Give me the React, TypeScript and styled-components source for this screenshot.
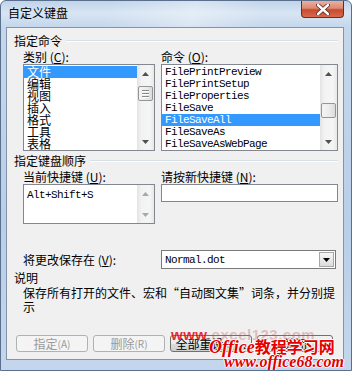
import React from 'react';
import styled, { createGlobalStyle } from 'styled-components';

const GlobalStyle = createGlobalStyle`
  html, body {
    margin: 0;
    padding: 0;
  }
  body {
    width: 352px;
    height: 375px;
    overflow: hidden;
    background: #ffffff;
    font-family: "Noto Sans CJK SC", "Liberation Sans", sans-serif;
    font-size: 12px;
    color: #000;
  }
`;

const Window = styled.div`
  position: relative;
  width: 352px;
  height: 371px;
  box-sizing: border-box;
  border: 1px solid #5a6f8c;
  border-radius: 6px 6px 0 0;
  background: linear-gradient(180deg, #bfd3ea 0px, #d8e5f3 12px, #c4d7ec 26px, #b9cfe8 60%, #c3d6ec 100%);
  display: flex;
  flex-direction: column;
  overflow: hidden;
`;

const TitleBar = styled.div`
  height: 26px;
  display: flex;
  justify-content: space-between;
  align-items: flex-start;
  padding-left: 7px;
  background: linear-gradient(100deg, rgba(255, 255, 255, 0) 30%, rgba(255, 255, 255, 0.35) 55%, rgba(255, 255, 255, 0) 75%);
`;

const TitleText = styled.div`
  margin-top: 4px;
  font-size: 12px;
  line-height: 16px;
  color: #000;
`;

const CloseButton = styled.div`
  width: 43px;
  height: 17px;
  margin-right: 7px;
  box-sizing: border-box;
  border: 1px solid #6e2a20;
  border-top: none;
  border-radius: 0 0 4px 4px;
  background: linear-gradient(180deg, #eab0a0 0%, #dc8a72 45%, #c9492e 55%, #d86a4c 100%);
  display: flex;
  align-items: center;
  justify-content: center;
`;

const Client = styled.div`
  flex: 1;
  margin: 0 7px 10px 5px;
  border: 1px solid #8393aa;
  background: #f0f0f0;
  padding: 6px 5px 0 7px;
  display: flex;
  flex-direction: column;
`;

const GroupHeader = styled.div<{ $top?: number }>`
  display: flex;
  align-items: center;
  margin-top: ${p => p.$top || 0}px;
  line-height: 14px;
  height: 14px;
`;

const Rule = styled.div`
  flex: 1;
  margin-left: 4px;
  height: 0;
  border-top: 1px solid #d5dfe5;
  border-bottom: 1px solid #ffffff;
`;

const Columns = styled.div<{ $top?: number }>`
  display: grid;
  grid-template-columns: 132px 177px;
  column-gap: 6px;
  padding-left: 9px;
  margin-top: ${p => p.$top || 0}px;
`;

const FieldLabel = styled.div<{ $h?: number }>`
  height: ${p => p.$h || 15}px;
  line-height: ${p => p.$h || 15}px;
  white-space: nowrap;
`;

const ListBox = styled.div<{ $h: number }>`
  height: ${p => p.$h}px;
  box-sizing: border-box;
  border: 1px solid #828790;
  background: #ffffff;
  display: flex;
`;

const ListItems = styled.div`
  flex: 1;
  padding-top: 1px;
  overflow: hidden;
`;

const ListItem = styled.div<{ $selected?: boolean; $mono?: boolean }>`
  height: 12px;
  line-height: 12px;
  padding-left: 3px;
  white-space: nowrap;
  background: ${p => (p.$selected ? '#3399ff' : 'transparent')};
  color: ${p => (p.$selected ? '#ffffff' : '#000000')};
  font-family: ${p => (p.$mono ? '"Liberation Mono", monospace' : '"Noto Sans CJK SC", sans-serif')};
  font-size: ${p => (p.$mono ? '11px' : '12px')};
  letter-spacing: ${p => (p.$mono ? '-0.6px' : '0')};
`;

const MonoText = styled.div`
  font-family: "Liberation Mono", monospace;
  font-size: 11px;
  letter-spacing: -0.6px;
  line-height: 12px;
  padding: 4px 0 0 3px;
  flex: 1;
`;

const ScrollBar = styled.div`
  width: 17px;
  display: flex;
  flex-direction: column;
  background: linear-gradient(90deg, #e3e3e3 0%, #f2f2f2 25%, #f5f5f5 75%, #e8e8e8 100%);
`;

const ArrowButton = styled.div`
  height: 17px;
  display: flex;
  align-items: center;
  justify-content: center;
`;

const Track = styled.div`
  flex: 1;
  display: flex;
  flex-direction: column;
  align-items: center;
`;

const Thumb = styled.div<{ $offset: number; $h: number }>`
  margin-top: ${p => p.$offset}px;
  width: 15px;
  height: ${p => p.$h}px;
  box-sizing: border-box;
  border: 1px solid #959595;
  border-radius: 2px;
  background: linear-gradient(90deg, #f4f4f4 0%, #ececec 50%, #dcdcdc 100%);
  display: flex;
  flex-direction: column;
  align-items: center;
  justify-content: center;
  gap: 1px;
`;

const Grip = styled.div`
  width: 7px;
  height: 1px;
  background: #8a8a8a;
  border-bottom: 1px solid #ffffff;
`;

const TextBox = styled.div<{ $h: number }>`
  height: ${p => p.$h}px;
  box-sizing: border-box;
  border: 1px solid #828790;
  background: #ffffff;
`;

const ComboBox = styled.div`
  height: 19px;
  width: 175px;
  box-sizing: border-box;
  border: 1px solid #7a7a7a;
  background: #ffffff;
  display: flex;
  align-items: center;
`;

const ComboValue = styled.div`
  flex: 1;
  font-family: "Liberation Mono", monospace;
  font-size: 11px;
  letter-spacing: -0.6px;
  padding-left: 3px;
`;

const ComboButton = styled.div`
  width: 15px;
  height: 15px;
  margin-right: 1px;
  box-sizing: border-box;
  border: 1px solid #a7a7a7;
  background: linear-gradient(180deg, #f6f6f6, #dcdcdc);
  display: flex;
  align-items: center;
  justify-content: center;
`;

const SaveRow = styled(Columns)`
  align-items: center;
`;

const SectionLabel = styled.div`
  margin-top: 2px;
  line-height: 14px;
`;

const Description = styled.div`
  margin: 1px -8px 0 0;
  padding-left: 9px;
  line-height: 14px;
  white-space: nowrap;
`;

const ButtonRow = styled.div`
  display: flex;
  gap: 5px;
  margin-top: 21px;
  padding-left: 2px;
`;

const DialogButton = styled.div<{ $w: number; $disabled?: boolean }>`
  width: ${p => p.$w}px;
  height: 17px;
  box-sizing: border-box;
  border: 1px solid ${p => (p.$disabled ? '#adb2b5' : '#707070')};
  border-radius: 3px;
  background: ${p => (p.$disabled ? '#f4f4f4' : 'linear-gradient(180deg, #f2f2f2 0%, #ebebeb 50%, #dddddd 50%, #cfcfcf 100%)')};
  color: ${p => (p.$disabled ? '#9a9a9a' : '#000000')};
  display: flex;
  align-items: center;
  justify-content: center;
  line-height: 14px;
  font-size: 12px;
  white-space: nowrap;
`;

const Small = styled.span`
  font-size: 10px;
`;

const Watermark = styled.div`
  position: absolute;
  left: 170px;
  top: 326px;
  pointer-events: none;
`;

const MarkSite = styled.div`
  font-family: "Liberation Sans", sans-serif;
  font-weight: bold;
  font-size: 15px;
  line-height: 15px;
  color: rgba(190, 90, 90, 0.35);
  letter-spacing: 0.5px;
`;

const MarkWww = styled.span`
  color: rgba(225, 20, 20, 0.9);
`;

const MarkBrand = styled.div`
  margin: -4px 0 0 38px;
  font-size: 16px;
  line-height: 17px;
  font-weight: bold;
  color: #e40000;
  white-space: nowrap;
  text-shadow: 1px 0 #fff, -1px 0 #fff, 0 1px #fff, 0 -1px #fff;
`;

const MarkOffice = styled.span`
  font-family: "Liberation Serif", serif;
  font-style: italic;
  font-size: 18px;
`;

const MarkUrl = styled.div`
  margin: -2px 0 0 53px;
  font-family: "Liberation Serif", serif;
  font-style: italic;
  font-weight: bold;
  font-size: 16px;
  line-height: 15px;
  color: #e00000;
  white-space: nowrap;
  text-shadow: 1px 0 #fff, -1px 0 #fff, 0 1px #fff, 0 -1px #fff;
`;

const UpArrow = ({ color = '#505050' }: { color?: string }) => (
  <svg width="7" height="4" viewBox="0 0 7 4">
    <path d="M0 4 L3.5 0 L7 4 Z" fill={color} />
  </svg>
);

const DownArrow = ({ color = '#505050' }: { color?: string }) => (
  <svg width="7" height="4" viewBox="0 0 7 4">
    <path d="M0 0 L7 0 L3.5 4 Z" fill={color} />
  </svg>
);

const VScroll = ({ offset, h, grip, color }: { offset?: number; h?: number; grip?: boolean; color?: string }) => (
  <ScrollBar>
    <ArrowButton><UpArrow color={color} /></ArrowButton>
    <Track>
      {h ? (
        <Thumb $offset={offset || 0} $h={h}>
          {grip && (<><Grip /><Grip /><Grip /></>)}
        </Thumb>
      ) : null}
    </Track>
    <ArrowButton><DownArrow color={color} /></ArrowButton>
  </ScrollBar>
);

const categories = ['文件', '编辑', '视图', '插入', '格式', '工具', '表格'];
const commands = ['FilePrintPreview', 'FilePrintSetup', 'FileProperties', 'FileSave', 'FileSaveAll', 'FileSaveAs', 'FileSaveAsWebPage'];

export default function App() {
  return (
    <>
      <GlobalStyle />
      <Window>
        <TitleBar>
          <TitleText>自定义键盘</TitleText>
          <CloseButton>
            <svg width="14" height="11" viewBox="0 0 14 11">
              <path d="M2 1 L12 10 M12 1 L2 10" stroke="#5a2018" strokeWidth="4" strokeLinecap="round" />
              <path d="M2 1 L12 10 M12 1 L2 10" stroke="#ffffff" strokeWidth="2.4" strokeLinecap="round" />
            </svg>
          </CloseButton>
        </TitleBar>
        <Client>
          <GroupHeader>
            指定命令
            <Rule />
          </GroupHeader>
          <Columns $top={1}>
            <FieldLabel>类别 (<u>C</u>):</FieldLabel>
            <FieldLabel>命令 (<u>O</u>):</FieldLabel>
            <ListBox $h={87}>
              <ListItems>
                {categories.map((c, i) => (
                  <ListItem key={c} $selected={i === 0}>{c}</ListItem>
                ))}
              </ListItems>
              <VScroll offset={4} h={15} grip />
            </ListBox>
            <ListBox $h={87}>
              <ListItems>
                {commands.map(c => (
                  <ListItem key={c} $mono $selected={c === 'FileSaveAll'}>{c}</ListItem>
                ))}
              </ListItems>
              <VScroll offset={21} h={15} />
            </ListBox>
          </Columns>

          <GroupHeader $top={3}>
            指定键盘顺序
            <Rule />
          </GroupHeader>
          <Columns $top={2}>
            <FieldLabel $h={14}>当前快捷键 (<u>U</u>):</FieldLabel>
            <FieldLabel $h={14}>请按新快捷键 (<u>N</u>):</FieldLabel>
            <ListBox $h={40}>
              <MonoText>Alt+Shift+S</MonoText>
              <VScroll color="#a8a8a8" />
            </ListBox>
            <TextBox $h={18} />
          </Columns>

          <SaveRow $top={26}>
            <FieldLabel>将更改保存在 (<u>V</u>):</FieldLabel>
            <ComboBox>
              <ComboValue>Normal.dot</ComboValue>
              <ComboButton>
                <svg width="7" height="4" viewBox="0 0 7 4">
                  <path d="M0 0 L7 0 L3.5 4 Z" fill="#000" />
                </svg>
              </ComboButton>
            </ComboBox>
          </SaveRow>

          <SectionLabel>说明</SectionLabel>
          <Description>
            保存所有打开的文件、宏和“自动图文集”词条，并分别提<br />示
          </Description>

          <ButtonRow>
            <DialogButton $w={72} $disabled>指定<Small>(A)</Small></DialogButton>
            <DialogButton $w={72} $disabled>删除<Small>(R)</Small></DialogButton>
            <DialogButton $w={82}>全部重设<Small>(S)</Small>...</DialogButton>
            <DialogButton $w={76}>关闭</DialogButton>
          </ButtonRow>
        </Client>
        <Watermark>
          <MarkSite><MarkWww>www</MarkWww>.excel123.com</MarkSite>
          <MarkBrand><MarkOffice>Office</MarkOffice>教程学习网</MarkBrand>
          <MarkUrl>www.office68.com</MarkUrl>
        </Watermark>
      </Window>
    </>
  );
}
